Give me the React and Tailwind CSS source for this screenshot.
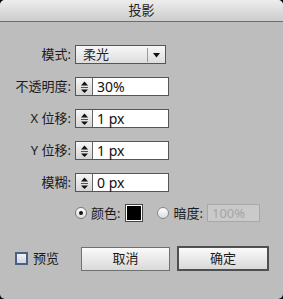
import React from "react";

const font = { fontFamily: '"Noto Sans", "Noto Sans CJK SC", sans-serif' };

function Spinner() {
  return (
    <div className="flex h-full w-[17px] flex-col items-center justify-center border-r border-[#666] bg-gradient-to-b from-[#f6f6f6] to-[#d6d6d6]">
      <svg width="9" height="14" viewBox="0 0 9 14">
        <path d="M4.5 1.5 L8 5.5 L1 5.5 Z" fill="#111" />
        <line x1="1" y1="7.5" x2="8" y2="7.5" stroke="#555" strokeWidth="1" />
        <path d="M1 9.5 L8 9.5 L4.5 13 Z" fill="#111" />
      </svg>
    </div>
  );
}

function NumField({ value }) {
  return (
    <div className="flex h-[19px] w-[94px] items-stretch border border-[#555] bg-white">
      <Spinner />
      <span className="flex items-center pl-[4px] text-[14px] leading-none text-[#111]">
        {value}
      </span>
    </div>
  );
}

function Row({ label, children }) {
  return (
    <div className="flex h-[19px] items-center">
      <span className="w-[72px] pr-[1px] text-right text-[13px] leading-none text-[#1a1a1a]">
        {label}
      </span>
      <div className="ml-[3px]">{children}</div>
    </div>
  );
}

export default function App() {
  return (
    <div className="h-[299px] w-[283px] bg-black" style={font}>
      <div className="flex h-full flex-col overflow-hidden rounded-[5px] bg-[#bdbdbd]">
        <div className="flex h-[22px] items-center justify-center border-b border-[#6f6f6f] bg-gradient-to-b from-[#ededed] to-[#cdcdcd] text-[13px] text-[#222]">
          投影
        </div>

        <div className="flex flex-col gap-[13px] pt-[23px]">
          <Row label="模式:">
            <div className="flex h-[19px] w-[91px] items-center border border-[#555] bg-gradient-to-b from-[#f7f7f7] to-[#dedede]">
              <span className="flex-1 pl-[7px] text-[13px] leading-none text-[#222]">
                柔光
              </span>
              <div className="h-[14px] w-px bg-[#9a9a9a]" />
              <svg width="17" height="8" viewBox="0 0 17 8">
                <path d="M5 2 L12 2 L8.5 6.5 Z" fill="#111" />
              </svg>
            </div>
          </Row>
          <Row label="不透明度:">
            <NumField value="30%" />
          </Row>
          <Row label="X 位移:">
            <NumField value="1 px" />
          </Row>
          <Row label="Y 位移:">
            <NumField value="1 px" />
          </Row>
          <Row label="模糊:">
            <NumField value="0 px" />
          </Row>
        </div>

        <div className="mt-[12px] flex h-[18px] items-center pl-[75px]">
          <span className="flex h-[12px] w-[12px] items-center justify-center rounded-full border border-[#777] bg-gradient-to-b from-[#ffffff] to-[#dcdcdc]">
            <span className="h-[4px] w-[4px] rounded-full bg-[#111]" />
          </span>
          <span className="ml-[4px] text-[13px] leading-none text-[#1a1a1a]">颜色:</span>
          <span className="ml-[5px] flex h-[18px] w-[18px] items-center justify-center border border-[#444] bg-white">
            <span className="h-[14px] w-[14px] bg-black" />
          </span>
          <span className="ml-[14px] h-[12px] w-[12px] rounded-full border border-[#888] bg-gradient-to-b from-[#ffffff] to-[#dcdcdc]" />
          <span className="ml-[4px] text-[13px] leading-none text-[#1a1a1a]">暗度:</span>
          <span className="ml-[4px] flex h-[18px] w-[53px] items-center border border-[#a8a8a8] bg-[#cacaca] pl-[4px] text-[13px] leading-none text-[#a5a5a5]">
            100%
          </span>
        </div>

        <div className="mt-[24px] flex items-center">
          <div className="flex items-center pl-[15px]">
            <span className="h-[13px] w-[13px] border-2 border-[#4a6088] bg-gradient-to-b from-[#f2f2f2] to-[#cfd6e0]" />
            <span className="ml-[5px] text-[13px] leading-none text-[#1a1a1a]">预览</span>
          </div>
          <button className="ml-[22px] h-[24px] w-[89px] border border-[#707070] bg-gradient-to-b from-[#fafafa] to-[#d9d9d9] text-[13px] text-[#1a1a1a]">
            取消
          </button>
          <button className="ml-[7px] h-[25px] w-[92px] border-2 border-[#4f4f4f] bg-gradient-to-b from-[#fafafa] to-[#d9d9d9] text-[13px] text-[#1a1a1a]">
            确定
          </button>
        </div>
      </div>
    </div>
  );
}
